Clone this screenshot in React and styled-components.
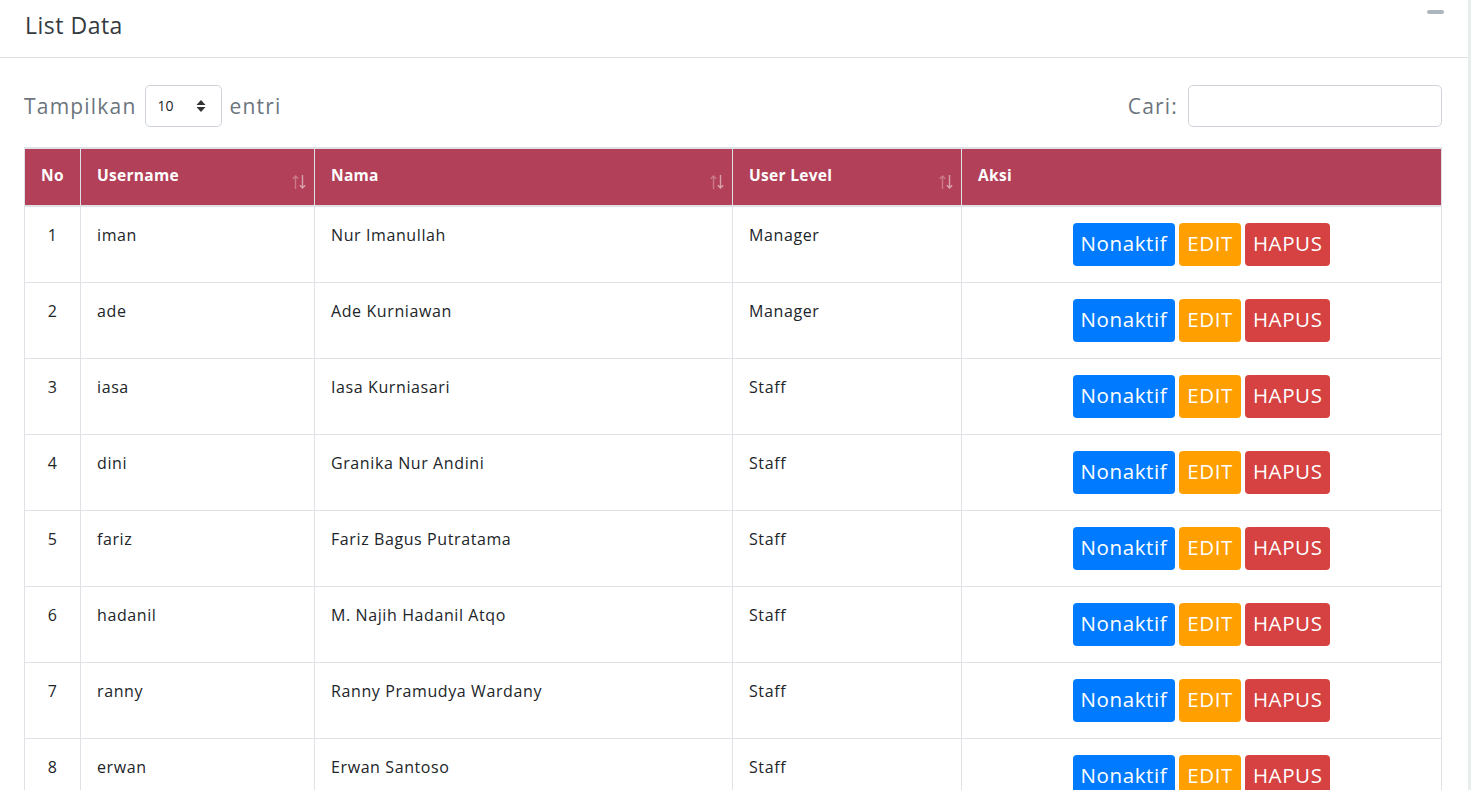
import React from 'react';
import styled, { createGlobalStyle } from 'styled-components';

const users = [
  { no: 1, username: 'iman', nama: 'Nur Imanullah', level: 'Manager' },
  { no: 2, username: 'ade', nama: 'Ade Kurniawan', level: 'Manager' },
  { no: 3, username: 'iasa', nama: 'Iasa Kurniasari', level: 'Staff' },
  { no: 4, username: 'dini', nama: 'Granika Nur Andini', level: 'Staff' },
  { no: 5, username: 'fariz', nama: 'Fariz Bagus Putratama', level: 'Staff' },
  { no: 6, username: 'hadanil', nama: 'M. Najih Hadanil Atqo', level: 'Staff' },
  { no: 7, username: 'ranny', nama: 'Ranny Pramudya Wardany', level: 'Staff' },
  { no: 8, username: 'erwan', nama: 'Erwan Santoso', level: 'Staff' },
];

const GlobalStyle = createGlobalStyle`
  html, body {
    margin: 0;
    padding: 0;
    overflow: hidden;
    background: #e6efec;
  }
  * { box-sizing: border-box; }
`;

const SortIcon = () => (
  <svg width="16" height="18" viewBox="0 0 16 18" fill="none" stroke="rgba(255,255,255,0.3)" strokeWidth="1.4">
    <path d="M4.5 16V3M1.8 5.8L4.5 3l2.7 2.8" />
    <path d="M11.5 2v13M8.8 12.2l2.7 2.8 2.7-2.8" stroke="rgba(255,255,255,0.5)" />
  </svg>
);

const SelectArrows = () => (
  <svg width="10" height="14" viewBox="0 0 10 14" fill="#333">
    <path d="M5 1L9.5 6H0.5Z" />
    <path d="M5 13L9.5 8H0.5Z" />
  </svg>
);

export default function App() {
  return (
    <>
      <GlobalStyle />
      <Card>
        <CardHeader>
          <Title>List Data</Title>
          <Collapse />
        </CardHeader>
        <CardBody>
          <Controls>
            <Label>
              Tampilkan
              <Select>
                <span>10</span>
                <SelectArrows />
              </Select>
              entri
            </Label>
            <Label>
              Cari:
              <Search />
            </Label>
          </Controls>
          <Table>
            <thead>
              <tr>
                <Th $w={56} $center>No</Th>
                <Th $w={234}>Username<SortWrap><SortIcon /></SortWrap></Th>
                <Th $w={418}>Nama<SortWrap><SortIcon /></SortWrap></Th>
                <Th $w={229}>User Level<SortWrap><SortIcon /></SortWrap></Th>
                <Th>Aksi</Th>
              </tr>
            </thead>
            <tbody>
              {users.map((u) => (
                <tr key={u.no}>
                  <Td $center>{u.no}</Td>
                  <Td>{u.username}</Td>
                  <Td>{u.nama}</Td>
                  <Td>{u.level}</Td>
                  <ActionCell>
                    <Button $bg="#007bff">Nonaktif</Button>
                    <Button $bg="#ffa000">EDIT</Button>
                    <Button $bg="#d64141">HAPUS</Button>
                  </ActionCell>
                </tr>
              ))}
            </tbody>
          </Table>
        </CardBody>
      </Card>
    </>
  );
}

const Card = styled.div`
  width: 1468px;
  min-height: 790px;
  background: #fff;
  font-family: 'Open Sans', 'Noto Sans', sans-serif;
`;

const CardHeader = styled.div`
  height: 58px;
  border-bottom: 1px solid #dcdfe3;
  display: flex;
  align-items: flex-start;
  justify-content: space-between;
  padding: 9px 24px 0 25px;
`;

const Title = styled.h3`
  margin: 0;
  font-size: 23px;
  font-weight: 400;
  letter-spacing: 0.5px;
  color: #343a40;
  line-height: 32px;
`;

const Collapse = styled.div`
  width: 17px;
  height: 4px;
  border-radius: 2px;
  background: #adb5bd;
  margin-top: 1px;
`;

const CardBody = styled.div`
  padding: 27px 26px 0 24px;
`;

const Controls = styled.div`
  display: flex;
  justify-content: space-between;
  align-items: center;
  margin-bottom: 20px;
`;

const Label = styled.label`
  display: flex;
  align-items: center;
  gap: 8px;
  font-size: 21px;
  letter-spacing: 1.2px;
  color: #6c757d;
  line-height: 42px;
`;

const Select = styled.div`
  width: 77px;
  height: 42px;
  border: 1px solid #ced4da;
  border-radius: 5px;
  display: flex;
  align-items: center;
  justify-content: space-between;
  padding: 0 15px 0 12px;
  font-size: 14px;
  letter-spacing: 0;
  color: #212529;
`;

const Search = styled.div`
  width: 254px;
  height: 42px;
  border: 1px solid #ced4da;
  border-radius: 5px;
  margin-left: 2px;
`;

const Table = styled.table`
  width: 100%;
  border-collapse: collapse;
  border-top: 2px solid #dee2e6;
  font-size: 16px;
  letter-spacing: 0.6px;
  color: #212529;
`;

const Th = styled.th`
  position: relative;
  width: ${(p) => (p.$w ? `${p.$w}px` : 'auto')};
  background: #b24058;
  color: #fff;
  font-weight: 700;
  font-size: 15.5px;
  letter-spacing: 0.3px;
  text-align: ${(p) => (p.$center ? 'center' : 'left')};
  padding: 16px 16px 20px;
  border: 1px solid #dee2e6;
  border-bottom: 2px solid #dee2e6;
  border-top: none;
  line-height: 20px;
  vertical-align: top;
`;

const SortWrap = styled.span`
  position: absolute;
  right: 7px;
  bottom: 14px;
  display: flex;
`;

const Td = styled.td`
  border: 1px solid #dee2e6;
  padding: 16px 16px;
  vertical-align: top;
  line-height: 24px;
  text-align: ${(p) => (p.$center ? 'center' : 'left')};
  height: 76px;
`;

const ActionCell = styled.td`
  border: 1px solid #dee2e6;
  padding: 16px;
  text-align: center;
  vertical-align: top;
  font-size: 0;
`;

const Button = styled.button`
  background: ${(p) => p.$bg};
  color: #fff;
  border: none;
  border-radius: 4px;
  height: 43px;
  padding: 0 8px 3px;
  margin: 0 2px;
  font-family: 'Open Sans', 'Noto Sans', sans-serif;
  font-size: 20.5px;
  letter-spacing: 0.6px;
  line-height: 1;
  vertical-align: top;
`;
